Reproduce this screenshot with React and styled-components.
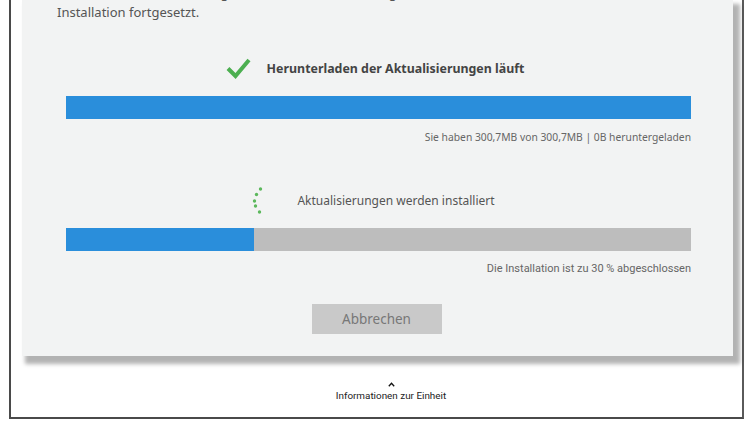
import React from "react";
import styled, { createGlobalStyle } from "styled-components";

const Global = createGlobalStyle`
  html, body { margin: 0; padding: 0; background: #ffffff; overflow: hidden; }
  body { font-family: "Noto Sans", "Open Sans", sans-serif; }
`;

const Frame = styled.div`
  margin-left: 9px;
  width: 731px;
  height: 417px;
  border-left: 2px solid #4a4a4a;
  border-right: 2px solid #5a5a5a;
  border-bottom: 2px solid #4a4a4a;
  display: flex;
  flex-direction: column;
  align-items: flex-start;
  background: #fff;
`;

const Panel = styled.div`
  margin-left: 11px;
  width: 711px;
  height: 356px;
  background: #f2f3f3;
  box-shadow: 5px 6px 4px 2px rgba(0, 0, 0, 0.3);
  display: flex;
  flex-direction: column;
  box-sizing: border-box;
  padding: 0 42px 0 44px;
  overflow: hidden;
`;

const Intro = styled.p`
  margin: -16px 0 0 -9px;
  font-size: 13px;
  line-height: 19px;
  color: #555;
  white-space: nowrap;
`;

const StatusRow = styled.div`
  display: flex;
  align-items: center;
  justify-content: center;
  gap: ${(p) => p.gap}px;
  height: 24px;
  margin-top: ${(p) => p.top}px;
  padding-right: ${(p) => p.shift}px;
`;

const StatusText = styled.span`
  font-size: ${(p) => (p.bold ? 12.4 : 12)}px;
  font-weight: ${(p) => (p.bold ? 700 : 400)};
  color: ${(p) => (p.bold ? "#444" : "#555")};
  white-space: nowrap;
`;

const Bar = styled.div`
  height: 23px;
  background: #bdbdbd;
  margin-top: ${(p) => p.top}px;
  display: flex;
`;

const Fill = styled.div`
  background: #2a8edb;
  height: 100%;
`;

const Caption = styled.div`
  text-align: right;
  font-size: ${(p) => (p.condensed ? 11 : 10.3)}px;
  line-height: 14px;
  color: #666;
  margin-top: 11px;
  white-space: nowrap;
  font-family: ${(p) => (p.condensed ? '"Roboto", "Noto Sans", sans-serif' : '"Noto Sans", sans-serif')};
`;

const ButtonRow = styled.div`
  display: flex;
  justify-content: center;
  margin-top: 28px;
  padding-right: 4px;
`;

const Button = styled.button`
  width: 130px;
  height: 30px;
  border: none;
  background: #c9c9c9;
  color: #777;
  font-family: "Noto Sans", sans-serif;
  font-size: 13.5px;
  padding: 0;
`;

const Footer = styled.div`
  align-self: stretch;
  display: flex;
  flex-direction: column;
  align-items: center;
  margin-top: 26px;
  margin-left: 29px;
`;

const Info = styled.div`
  font-family: "Roboto", sans-serif;
  font-size: 9.9px;
  line-height: 12px;
  color: #222;
  margin-top: 3px;
`;

const Check = () => (
  <svg width="25" height="22" viewBox="0 0 25 22">
    <path d="M2 11.5 L9.5 19 L23 3" fill="none" stroke="#4caf50" strokeWidth="4" />
  </svg>
);

const Spinner = () => (
  <svg width="14" height="28" viewBox="0 0 14 28">
    <circle cx="10.5" cy="3" r="1.7" fill="#5cb85c" />
    <circle cx="6.5" cy="8.5" r="1.7" fill="#5cb85c" />
    <circle cx="4.5" cy="15" r="1.7" fill="#5cb85c" />
    <circle cx="5.5" cy="20" r="1.7" fill="#5cb85c" />
    <circle cx="9.5" cy="26" r="1.7" fill="#5cb85c" />
  </svg>
);

const Chevron = () => (
  <svg width="7" height="5" viewBox="0 0 7 5">
    <path d="M0.8 4.2 L3.5 1.2 L6.2 4.2" fill="none" stroke="#111" strokeWidth="1.3" />
  </svg>
);

export default function App() {
  const progress = 30;
  return (
    <>
      <Global />
      <Frame>
        <Panel>
          <Intro>
            Während der Aktualisierung kann das Gerät weiterhin genutzt werden; anschließend wird die
            <br />
            Installation fortgesetzt.
          </Intro>
          <StatusRow top={34} gap={16} shift={7}>
            <Check />
            <StatusText bold>Herunterladen der Aktualisierungen läuft</StatusText>
          </StatusRow>
          <Bar top={16}>
            <Fill style={{ width: "100%" }} />
          </Bar>
          <Caption>Sie haben 300,7MB von 300,7MB | 0B heruntergeladen</Caption>
          <StatusRow top={44} gap={33} shift={12}>
            <Spinner />
            <StatusText>Aktualisierungen werden installiert</StatusText>
          </StatusRow>
          <Bar top={16}>
            <Fill style={{ width: `${progress}%` }} />
          </Bar>
          <Caption condensed>Die Installation ist zu 30 % abgeschlossen</Caption>
          <ButtonRow>
            <Button>Abbrechen</Button>
          </ButtonRow>
        </Panel>
        <Footer>
          <Chevron />
          <Info>Informationen zur Einheit</Info>
        </Footer>
      </Frame>
    </>
  );
}
